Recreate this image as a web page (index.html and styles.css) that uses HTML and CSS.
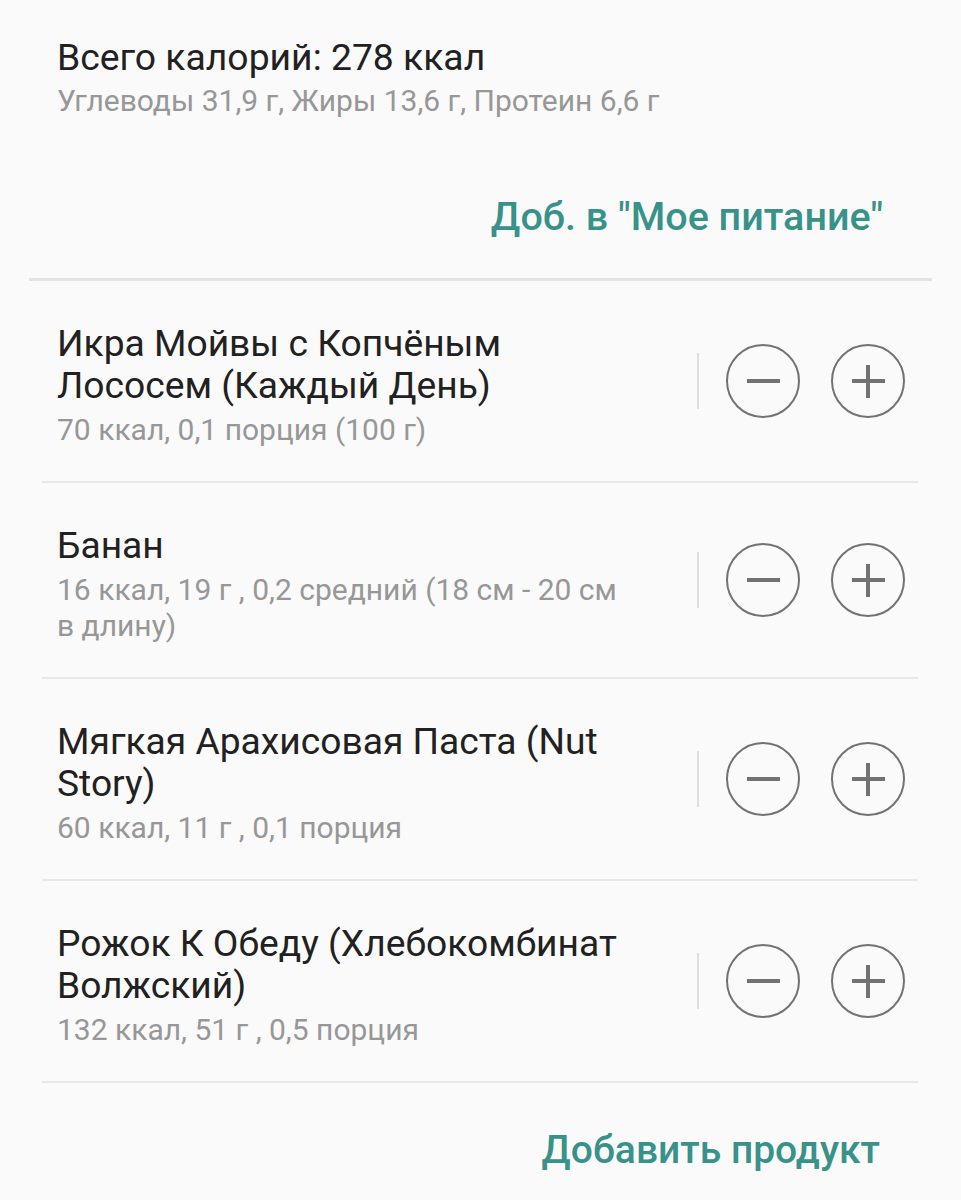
FILE: index.html
```html
<!DOCTYPE html>
<html lang="ru">
<head>
<meta charset="utf-8">
<link rel="stylesheet" href="styles.css">
</head>
<body>
<div class="header">
  <div class="total">Всего калорий: 278 ккал</div>
  <div class="macros">Углеводы 31,9 г, Жиры 13,6 г, Протеин 6,6 г</div>
</div>
<div class="action add-meal">Доб. в "Мое питание"</div>
<div class="header-divider"></div>
<div class="list">
  <div class="item">
    <div class="info">
      <div class="name">Икра Мойвы с Копчёным Лососем (Каждый День)</div>
      <div class="detail">70 ккал, 0,1 порция (100 г)</div>
    </div>
    <div class="controls">
      <span class="vsep"></span>
      <span class="circle minus"></span>
      <span class="circle plus"></span>
    </div>
  </div>
  <div class="item">
    <div class="info">
      <div class="name">Банан</div>
      <div class="detail">16 ккал, 19 г , 0,2 средний (18 см - 20 см в длину)</div>
    </div>
    <div class="controls">
      <span class="vsep"></span>
      <span class="circle minus"></span>
      <span class="circle plus"></span>
    </div>
  </div>
  <div class="item">
    <div class="info">
      <div class="name">Мягкая Арахисовая Паста (Nut Story)</div>
      <div class="detail">60 ккал, 11 г , 0,1 порция</div>
    </div>
    <div class="controls">
      <span class="vsep"></span>
      <span class="circle minus"></span>
      <span class="circle plus"></span>
    </div>
  </div>
  <div class="item">
    <div class="info">
      <div class="name">Рожок К Обеду (Хлебокомбинат Волжский)</div>
      <div class="detail">132 ккал, 51 г , 0,5 порция</div>
    </div>
    <div class="controls">
      <span class="vsep"></span>
      <span class="circle minus"></span>
      <span class="circle plus"></span>
    </div>
  </div>
</div>
<div class="action add-product">Добавить продукт</div>
</body>
</html>
```
FILE: styles.css
```css
html, body {
  margin: 0;
  padding: 0;
  background: #fafafa;
  font-family: Roboto, "Noto Sans", sans-serif;
}
.header {
  padding: 36px 57px 0;
}
.total {
  font-size: 37.3px;
  line-height: 42px;
  color: #212121;
}
.macros {
  margin-top: 4px;
  font-size: 30px;
  line-height: 37px;
  color: #979797;
}
.action {
  text-align: right;
  font-size: 39.5px;
  font-weight: 500;
  line-height: 42px;
  color: #39928a;
}
.add-meal {
  margin-top: 77px;
  padding-right: 78px;
}
.header-divider {
  margin: 40px 29px 0;
  height: 3px;
  background: #e3e3e3;
}
.list {
  margin: 0 43px 0 42px;
}
.item {
  display: flex;
  align-items: center;
  padding: 41px 13px 33px 15px;
  border-bottom: 2px solid #e8e8e8;
}
.info {
  flex: 1;
  padding-right: 62px;
}
.name {
  font-size: 37.2px;
  line-height: 42px;
  color: #212121;
}
.detail {
  margin-top: 6px;
  font-size: 30px;
  line-height: 36px;
  color: #979797;
}
.controls {
  display: flex;
  align-items: center;
  margin-bottom: 8px;
}
.vsep {
  width: 2px;
  height: 56px;
  background: #dedede;
  margin-right: 27px;
}
.circle {
  position: relative;
  width: 70px;
  height: 70px;
  border: 2px solid #727272;
  border-radius: 50%;
}
.minus {
  margin-right: 31px;
}
.circle::before,
.circle::after {
  content: "";
  position: absolute;
  left: 50%;
  top: 50%;
  background: #727272;
}
.circle::before {
  width: 33px;
  height: 4px;
  margin: -2px 0 0 -16.5px;
}
.plus::after {
  width: 4px;
  height: 33px;
  margin: -16.5px 0 0 -2px;
}
.add-product {
  margin-top: 46px;
  padding-right: 81px;
  font-size: 39px;
}
```
